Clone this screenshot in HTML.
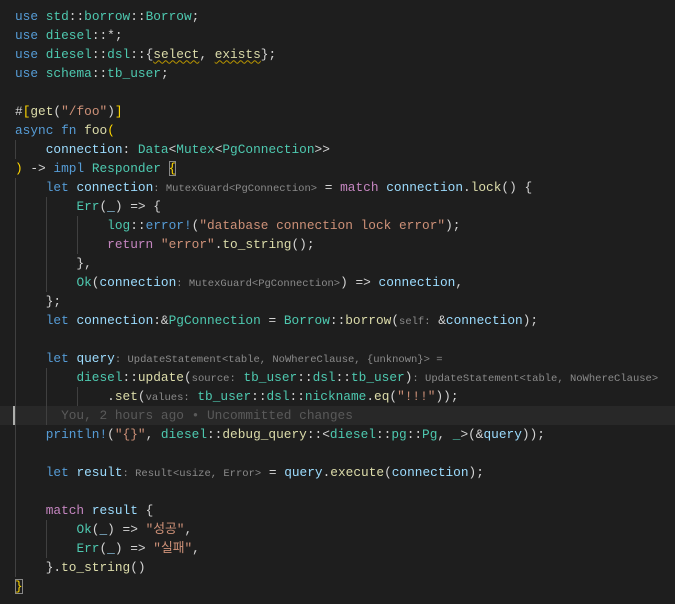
<!DOCTYPE html>
<html><head><meta charset="utf-8">
<style>
html,body{margin:0;padding:0;background:#1e1e1e;width:675px;height:604px;overflow:hidden}
.l{position:absolute;left:15px;height:19px;line-height:19px;white-space:pre;font-family:"Liberation Mono","Noto Sans CJK KR",monospace;font-size:12.8px;color:#d4d4d4}
.k{color:#569cd6}.v{color:#9cdcfe}.t{color:#4ec9b0}.f{color:#dcdcaa}.s{color:#ce9178}.c{color:#c586c0}.y{color:#ffd700}
.h{font-family:"Liberation Mono",monospace;font-size:10.5px;color:#8b8b8b}
.g{position:absolute;width:1px;background:#404040}
.sq{text-decoration:underline wavy #b89500;text-decoration-thickness:1px;text-underline-offset:2px}
.bx{outline:1px solid #888;outline-offset:-1px}
</style></head><body>
<div style="position:absolute;left:0;top:405.5px;width:675px;height:19px;background:#282828"></div>
<div style="position:absolute;left:13px;top:405.5px;width:2px;height:19px;background:#aeafad"></div>
<div class="g" style="left:15px;top:139.5px;height:19px"></div>
<div class="g" style="left:15px;top:177.5px;height:399px"></div>
<div class="g" style="left:46px;top:196.5px;height:95px"></div>
<div class="g" style="left:46px;top:367.5px;height:57px"></div>
<div class="g" style="left:46px;top:519.5px;height:38px"></div>
<div class="g" style="left:77px;top:215.5px;height:38px"></div>
<div class="g" style="left:77px;top:386.5px;height:19px"></div>

<div class="l" style="top:6.5px"><span class="k">use</span> <span class="t">std</span>::<span class="t">borrow</span>::<span class="t">Borrow</span>;</div>
<div class="l" style="top:25.5px"><span class="k">use</span> <span class="t">diesel</span>::*;</div>
<div class="l" style="top:44.5px"><span class="k">use</span> <span class="t">diesel</span>::<span class="t">dsl</span>::{<span class="f sq">select</span>, <span class="f sq">exists</span>};</div>
<div class="l" style="top:63.5px"><span class="k">use</span> <span class="t">schema</span>::<span class="t">tb_user</span>;</div>
<div class="l" style="top:101.5px">#<span class="y">[</span><span class="f">get</span>(<span class="s">"/foo"</span>)<span class="y">]</span></div>
<div class="l" style="top:120.5px"><span class="k">async</span> <span class="k">fn</span> <span class="f">foo</span><span class="y">(</span></div>
<div class="l" style="top:139.5px">    <span class="v">connection</span>: <span class="t">Data</span>&lt;<span class="t">Mutex</span>&lt;<span class="t">PgConnection</span>&gt;&gt;</div>
<div class="l" style="top:158.5px"><span class="y">)</span> -&gt; <span class="k">impl</span> <span class="t">Responder</span> <span class="y bx">{</span></div>
<div class="l" style="top:177.5px">    <span class="k">let</span> <span class="v">connection</span><span class="h">: MutexGuard&lt;PgConnection&gt;</span> = <span class="c">match</span> <span class="v">connection</span>.<span class="f">lock</span>() {</div>
<div class="l" style="top:196.5px">        <span class="t">Err</span>(<span class="v">_</span>) =&gt; {</div>
<div class="l" style="top:215.5px">            <span class="t">log</span>::<span class="k">error!</span>(<span class="s">"database connection lock error"</span>);</div>
<div class="l" style="top:234.5px">            <span class="c">return</span> <span class="s">"error"</span>.<span class="f">to_string</span>();</div>
<div class="l" style="top:253.5px">        },</div>
<div class="l" style="top:272.5px">        <span class="t">Ok</span>(<span class="v">connection</span><span class="h">: MutexGuard&lt;PgConnection&gt;</span>) =&gt; <span class="v">connection</span>,</div>
<div class="l" style="top:291.5px">    };</div>
<div class="l" style="top:310.5px">    <span class="k">let</span> <span class="v">connection</span>:&amp;<span class="t">PgConnection</span> = <span class="t">Borrow</span>::<span class="f">borrow</span>(<span class="h">self:</span> &amp;<span class="v">connection</span>);</div>
<div class="l" style="top:348.5px">    <span class="k">let</span> <span class="v">query</span><span class="h">: UpdateStatement&lt;table, NoWhereClause, {unknown}&gt; =</span></div>
<div class="l" style="top:367.5px">        <span class="t">diesel</span>::<span class="f">update</span>(<span class="h">source:</span> <span class="t">tb_user</span>::<span class="t">dsl</span>::<span class="t">tb_user</span>)<span class="h">: UpdateStatement&lt;table, NoWhereClause&gt;</span></div>
<div class="l" style="top:386.5px">            .<span class="f">set</span>(<span class="h">values:</span> <span class="t">tb_user</span>::<span class="t">dsl</span>::<span class="t">nickname</span>.<span class="f">eq</span>(<span class="s">"!!!"</span>));</div>
<div class="l" style="top:405.5px;color:#5a5a5a">      You, 2 hours ago • Uncommitted changes</div>
<div class="l" style="top:424.5px">    <span class="k">println!</span>(<span class="s">"{}"</span>, <span class="t">diesel</span>::<span class="f">debug_query</span>::&lt;<span class="t">diesel</span>::<span class="t">pg</span>::<span class="t">Pg</span>, <span class="t">_</span>&gt;(&amp;<span class="v">query</span>));</div>
<div class="l" style="top:462.5px">    <span class="k">let</span> <span class="v">result</span><span class="h">: Result&lt;usize, Error&gt;</span> = <span class="v">query</span>.<span class="f">execute</span>(<span class="v">connection</span>);</div>
<div class="l" style="top:500.5px">    <span class="c">match</span> <span class="v">result</span> {</div>
<div class="l" style="top:519.5px">        <span class="t">Ok</span>(<span class="v">_</span>) =&gt; <span class="s">"성공"</span>,</div>
<div class="l" style="top:538.5px">        <span class="t">Err</span>(<span class="v">_</span>) =&gt; <span class="s">"실패"</span>,</div>
<div class="l" style="top:557.5px">    }.<span class="f">to_string</span>()</div>
<div class="l" style="top:576.5px"><span class="y bx">}</span></div>
</body></html>
